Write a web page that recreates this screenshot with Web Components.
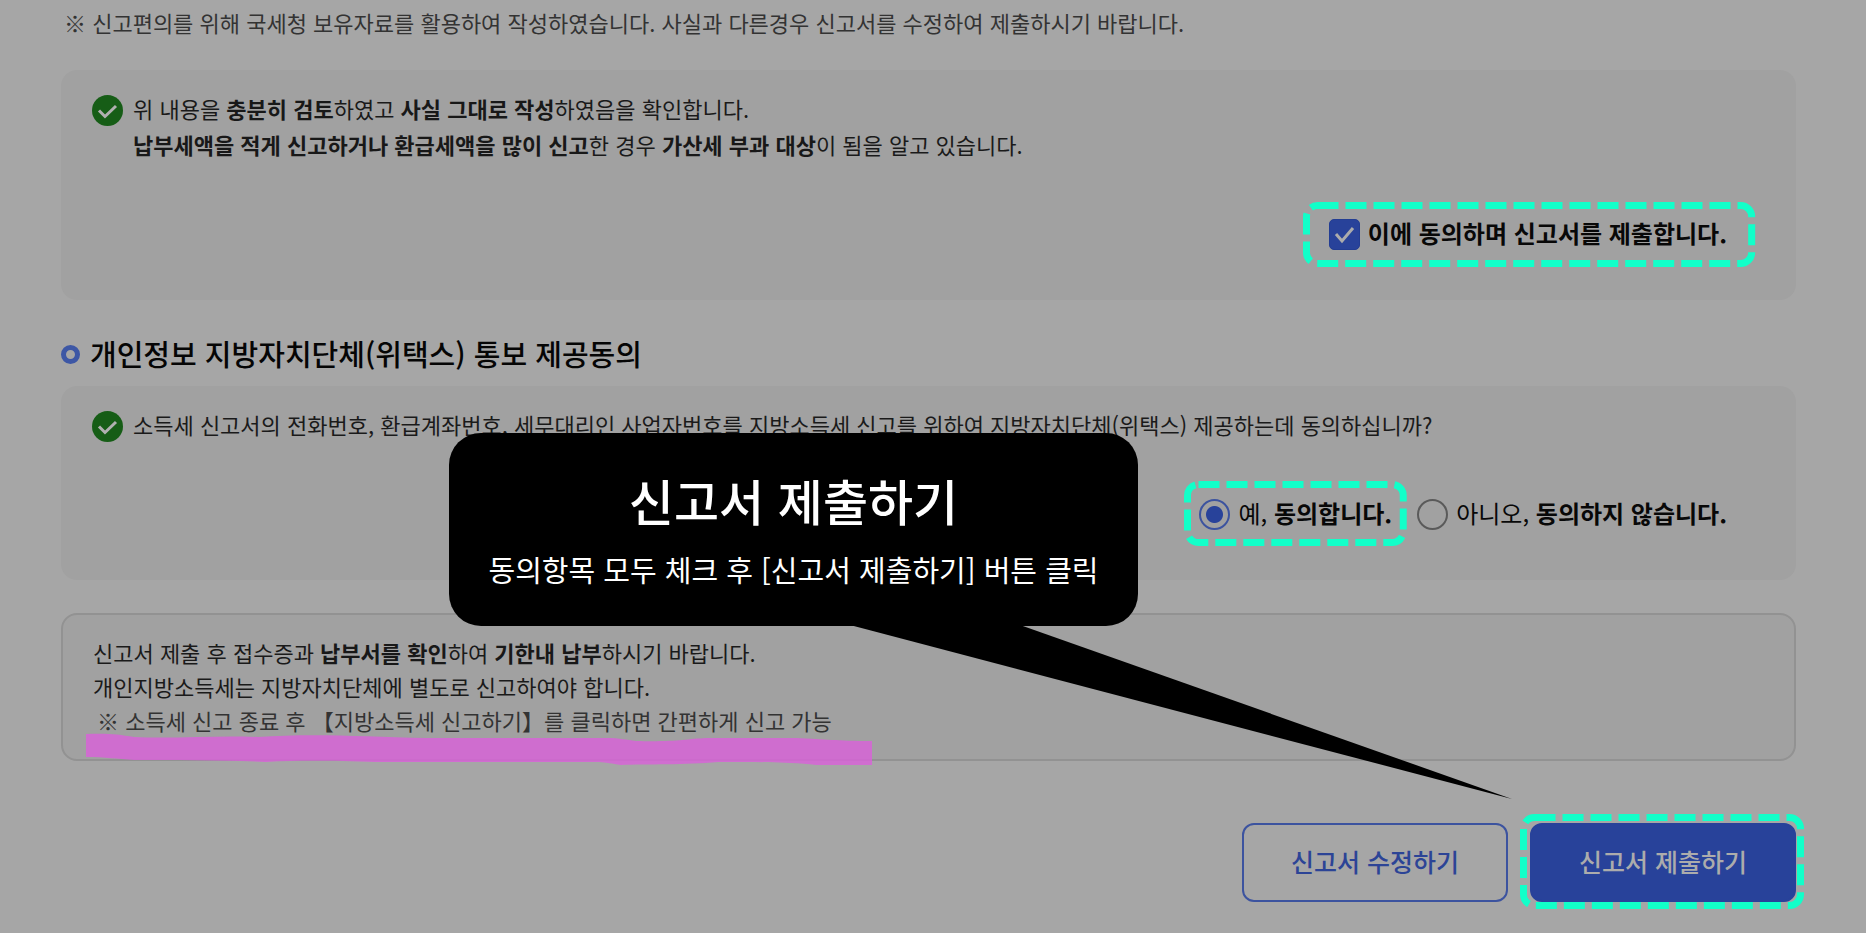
<!DOCTYPE html>
<html lang="ko">
<head>
<meta charset="utf-8">
<meta name="viewport" content="width=device-width, initial-scale=1">
<title>신고서 제출하기</title>
<style>
  body {
    margin: 0;
    background: #a6a6a6;
    color: #1a1a1a;
    font: 22px/36px "Noto Sans CJK KR", "Noto Sans", sans-serif;
  }
  b { font-weight: 700; color: #181818; }
</style>
</head>
<body>
<submit-page>
  <p slot="note">※ 신고편의를 위해 국세청 보유자료를 활용하여 작성하였습니다. 사실과 다른경우 신고서를 수정하여 제출하시기 바랍니다.</p>

  <consent-panel>
    <span>위 내용을 <b>충분히 검토</b>하였고 <b>사실 그대로 작성</b>하였음을 확인합니다.<br><b>납부세액을 적게 신고하거나 환급세액을 많이 신고</b>한 경우 <b>가산세 부과 대상</b>이 됨을 알고 있습니다.</span>
    <agree-check slot="choice">이에 동의하며 신고서를 제출합니다.</agree-check>
  </consent-panel>

  <section-title>개인정보 지방자치단체(위택스) 통보 제공동의</section-title>

  <consent-panel>
    <span>소득세 신고서의 전화번호, 환급계좌번호, 세무대리인 사업자번호를 지방소득세 신고를 위하여 지방자치단체(위택스) 제공하는데 동의하십니까?</span>
    <agree-radios slot="choice"></agree-radios>
  </consent-panel>

  <info-box>
    <span>신고서 제출 후 접수증과 <b>납부서를 확인</b>하여 <b>기한내 납부</b>하시기 바랍니다.</span>
    <span>개인지방소득세는 지방자치단체에 별도로 신고하여야 합니다.</span>
    <span slot="tip">※ 소득세 신고 종료 후 【지방소득세 신고하기】를 클릭하면 간편하게 신고 가능</span>
  </info-box>

  <action-button slot="actions">신고서 수정하기</action-button>
  <mark-frame slot="actions" style="--inset: -9px -8px -7px -10px">
    <action-button primary>신고서 제출하기</action-button>
    <guide-callout slot="over">
      <span slot="title">신고서 제출하기</span>
      동의항목 모두 체크 후 [신고서 제출하기] 버튼 클릭
    </guide-callout>
  </mark-frame>
</submit-page>

<script>
  const define = (name, html) => {
    const template = document.createElement('template');
    template.innerHTML = html;
    customElements.define(name, class extends HTMLElement {
      constructor() {
        super();
        this.attachShadow({ mode: 'open' }).append(template.content.cloneNode(true));
      }
    });
  };

  define('submit-page', `
    <style>
      :host { display: block; }
      main { padding: 4px 70px 31px 61px; }
      ::slotted(p) { margin: 0 0 30px; padding-left: 3px; color: #333; }
      .actions { display: flex; justify-content: flex-end; gap: 22px; margin-top: 62px; }
    </style>
    <main>
      <slot name="note"></slot>
      <slot></slot>
      <div class="actions"><slot name="actions"></slot></div>
    </main>`);

  define('consent-panel', `
    <style>
      :host { display: block; padding: 20px 69px 50px 31px; border-radius: 16px; background: #a1a1a1; }
      .text { display: flex; gap: 10px; }
      svg { flex: none; width: 31px; height: 31px; margin-top: 5px; }
      .choice { display: flex; justify-content: flex-end; margin-top: 57px; }
    </style>
    <div class="text">
      <svg viewBox="0 0 31 31" aria-hidden="true">
        <circle cx="15.5" cy="15.5" r="15.5" fill="#165d16"/>
        <path d="M7 15.5l6 6L24 11" fill="none" stroke="#b0b0b0" stroke-width="3"/>
      </svg>
      <slot></slot>
    </div>
    <div class="choice"><slot name="choice"></slot></div>`);

  define('section-title', `
    <style>
      :host { display: block; margin: 33px 0 13px; }
      h2 { display: flex; align-items: center; gap: 10px; margin: 0; color: #050505; font-size: 29px; font-weight: 500; line-height: 40px; }
      i { box-sizing: border-box; width: 19px; height: 19px; margin-top: 3px; border: 5px solid #3d57a5; border-radius: 50%; }
    </style>
    <h2><i></i><slot></slot></h2>`);

  /* Dashed highlight drawn round whatever is slotted in. */
  define('mark-frame', `
    <style>
      :host { display: flex; position: relative; }
      .ring { position: absolute; inset: var(--inset); pointer-events: none; }
      svg { display: block; width: 100%; height: 100%; overflow: visible; }
      rect { width: calc(100% - 7px); height: calc(100% - 7px); fill: none; stroke: #12ffc9; stroke-width: 7px; stroke-dasharray: 21 7; }
    </style>
    <slot></slot>
    <div class="ring"><svg aria-hidden="true"><rect x="3.5" y="3.5" rx="11"/></svg></div>
    <slot name="over"></slot>`);

  const choiceStyle = `
      label { display: flex; align-items: center; gap: 8px; height: 31px; color: #080808; font-size: 24px; white-space: nowrap; }
      .label { padding-bottom: 4px; }
      input { appearance: none; flex: none; box-sizing: border-box; width: 31px; height: 31px; margin: 0; }`;

  define('agree-check', `
    <style>
      ${choiceStyle}
      mark-frame { --inset: -17px -28px -17px -26px; }
      label { font-weight: 700; }
      .box { display: grid; }
      .box > * { grid-area: 1 / 1; }
      input { border: 1px solid #233d93; border-radius: 5px; background: #28429a; }
      svg { width: 31px; height: 31px; pointer-events: none; opacity: 0; }
      input:checked + svg { opacity: 1; }
    </style>
    <mark-frame>
      <label>
        <span class="box">
          <input type="checkbox" checked>
          <svg viewBox="0 0 31 31" aria-hidden="true"><path d="M7 15l6 7L24 9" fill="none" stroke="#acacac" stroke-width="3"/></svg>
        </span>
        <span class="label"><slot></slot></span>
      </label>
    </mark-frame>`);

  define('agree-radios', `
    <style>
      ${choiceStyle}
      :host { display: flex; gap: 25px; }
      mark-frame { --inset: -18px -15px -16px; }
      b { font-weight: 700; }
      input { border: 2px solid #5a5a5a; border-radius: 50%; }
      input:checked { border-color: #3c539f; background: radial-gradient(circle, #28429a 8px, transparent 9px); }
    </style>
    <mark-frame>
      <label><input type="radio" name="agree" checked><span class="label">예, <b>동의합니다.</b></span></label>
    </mark-frame>
    <label><input type="radio" name="agree"><span class="label">아니오, <b>동의하지 않습니다.</b></span></label>`);

  define('info-box', `
    <style>
      :host { display: block; position: relative; margin-top: 33px; padding: 20px 30px 22px; border: 2px solid #929292; border-radius: 16px; background: #a1a1a1; line-height: 34px; }
      ::slotted(span) { display: block; }
      .tip { color: #333; padding-left: 4px; }
      svg { position: absolute; left: 23px; bottom: -7px; width: 786px; height: 34px; }
    </style>
    <slot></slot>
    <div class="tip"><slot name="tip"></slot></div>
    <svg viewBox="0 0 786 34" aria-hidden="true">
      <path fill="#db60db" fill-opacity=".8" d="M0 2C20 1 32 2 48 5C90 7 130 3 172 5C230 1 280 5 340 6H520C535 6 540 8 550 9C590 10 600 7 620 6H710C740 7 750 9 786 9V33H730C710 31 690 30 660 30H632C600 33 560 32 535 33C525 32 522 30 510 30H290C250 29 220 28 180 30C140 28 90 28 48 28C30 27 20 25 0 25Z"/>
    </svg>`);

  define('action-button', `
    <style>
      :host { display: block; }
      button { box-sizing: border-box; min-width: 266px; height: 79px; padding: 0 24px 4px; border: 2px solid #3c539f; border-radius: 12px; background: transparent; color: #2c4496; font: inherit; font-size: 25px; font-weight: 500; cursor: pointer; }
      :host([primary]) button { border-color: #28429a; background: #28429a; color: #acacac; }
    </style>
    <button type="button"><slot></slot></button>`);

  /* Speech bubble whose tail ends at the top-left corner of the framed button. */
  define('guide-callout', `
    <style>
      :host { position: absolute; right: 658px; bottom: 276px; z-index: 1; color: #fff; text-align: center; white-space: nowrap; }
      .bubble { box-sizing: border-box; width: 689px; height: 193px; padding: 31px 24px 0; border-radius: 32px; background: #000; font-size: 29px; line-height: 40px; }
      h1 { margin: 0 0 13px; font-size: 49px; font-weight: 500; line-height: 72px; }
      svg { position: absolute; left: 401px; top: 192px; width: 662px; height: 174px; pointer-events: none; }
    </style>
    <div class="bubble"><h1><slot name="title"></slot></h1><slot></slot></div>
    <svg viewBox="0 0 662 174" aria-hidden="true"><path d="M0 0H170L662 174Z"/></svg>`);
</script>
</body>
</html>
